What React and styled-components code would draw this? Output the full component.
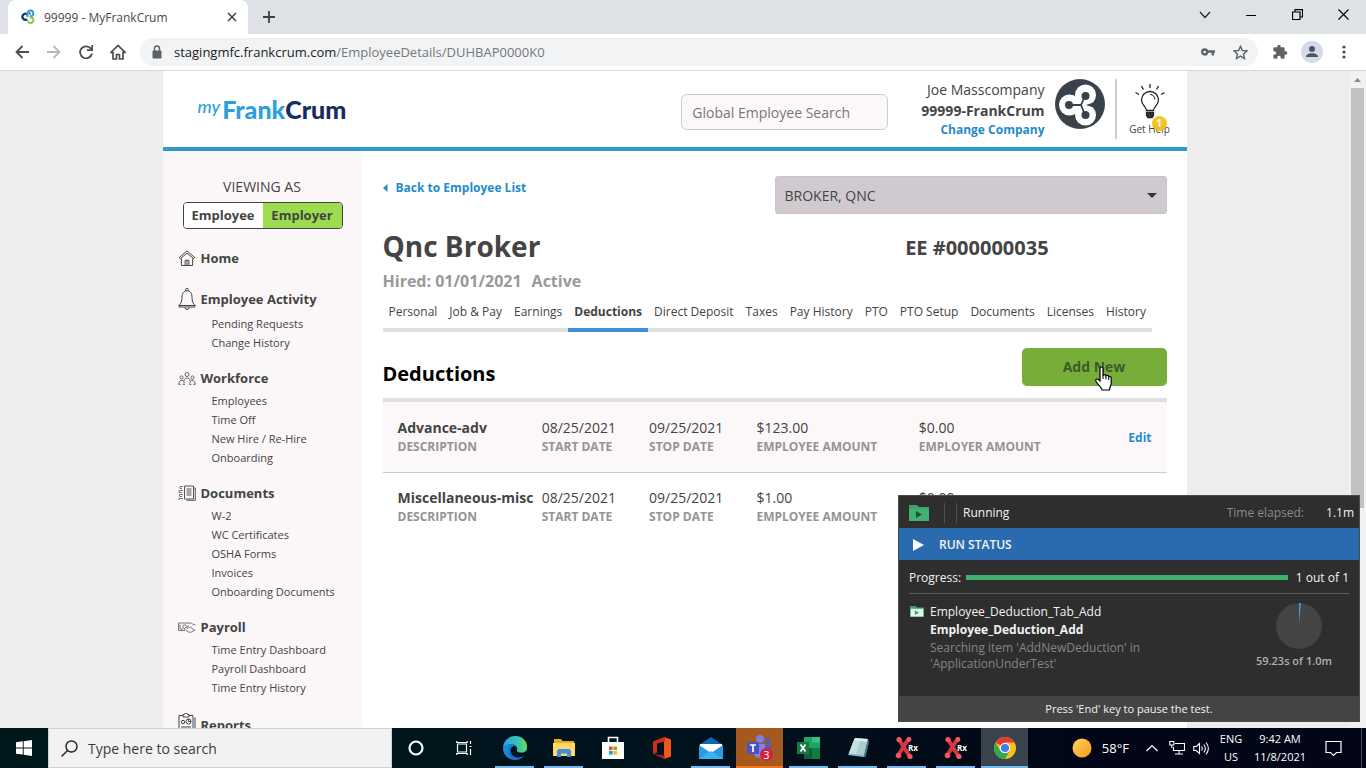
import React from 'react';
import styled, { createGlobalStyle, css } from 'styled-components';

const PAGE_FONT = '"Open Sans", "Noto Sans", sans-serif';

const GlobalStyle = createGlobalStyle`
  *, *::before, *::after { box-sizing: border-box; }
  body { margin: 0; font-family: ${PAGE_FONT}; font-size: 14px; color: #444; background: #ededed; }
  button, input, select { font-family: inherit; font-size: inherit; color: inherit; margin: 0; }
  button { cursor: pointer; padding: 0; border: 0; background: none; }
  a { text-decoration: none; color: inherit; }
  ul { list-style: none; margin: 0; padding: 0; }
  h1, h2, p { margin: 0; }
  svg { display: block; flex: none; }
`;

const Screen = styled.div`
  display: flex;
  flex-direction: column;
  height: 100vh;
  overflow: hidden;
`;

/* ---------- Browser window ---------- */

const TabStrip = styled.div`
  display: flex;
  align-items: stretch;
  height: 34px;
  flex: none;
  padding-left: 8px;
  background: #dee1e6;
`;

const BrowserTab = styled.div`
  display: flex;
  align-items: center;
  width: 240px;
  padding: 0 8px 0 12px;
  gap: 8px;
  background: #fff;
  border-radius: 8px 8px 0 0;
  font-size: 12px;
  color: #45494d;
`;

const TabTitle = styled.span`
  flex: 1;
  white-space: nowrap;
`;

const IconButton = styled.button`
  display: flex;
  align-items: center;
  justify-content: center;
  width: ${(p) => p.$w || 16}px;
  height: ${(p) => p.$h || 16}px;
  color: ${(p) => p.$color || '#5f6368'};
`;

const WindowControls = styled.div`
  display: flex;
  align-items: center;
  margin-left: auto;
  height: 29px;
`;

const Toolbar = styled.div`
  display: flex;
  align-items: center;
  height: 37px;
  flex: none;
  padding: 0 6px;
  background: #fff;
  border-bottom: 1px solid #d5d7da;
`;

const AddressBar = styled.div`
  display: flex;
  align-items: center;
  flex: 1;
  height: 28px;
  margin: 0 6px;
  padding: 0 2px 0 10px;
  border-radius: 14px;
  background: #f1f3f4;
  color: #74787c;
`;

const Url = styled.span`
  flex: 1;
  margin-left: 10px;
  font-size: 13px;
  white-space: nowrap;
  b { font-weight: 400; color: #202124; }
`;

const Avatar = styled.span`
  display: flex;
  align-items: center;
  justify-content: center;
  width: 22px;
  height: 22px;
  border-radius: 50%;
  background: #d5dbe6;
`;

/* ---------- Web page ---------- */

const Viewport = styled.div`
  display: flex;
  flex: 1;
  min-height: 0;
  overflow: hidden;
  background: #ededed;
`;

const PageScroll = styled.div`
  flex: 1;
  min-width: 0;
  overflow: hidden;
`;

const Scrollbar = styled.div`
  display: flex;
  flex-direction: column;
  align-items: center;
  width: 17px;
  background: #f1f1f1;
`;

const ScrollArrow = styled.span`
  display: flex;
  align-items: center;
  height: 17px;
`;

const ScrollThumb = styled.span`
  width: 13px;
  height: 64%;
  background: #c1c1c1;
`;

const Site = styled.div`
  max-width: 1024px;
  margin: 0 auto;
  background: #fff;
`;

const SiteHeader = styled.header`
  display: flex;
  align-items: center;
  height: 80px;
  padding: 0 16px 0 35px;
  border-bottom: 4px solid #2d9bd0;
`;

const Brand = styled.a`
  display: flex;
  align-items: center;
  margin-right: auto;
  color: #2f9fdc;
  font-family: Lato, sans-serif;
  font-size: 25px;
  font-weight: 900;
  line-height: 30px;
`;

const BrandMy = styled.span`
  align-self: flex-start;
  font-size: 18px;
  font-style: italic;
  font-weight: 500;
  line-height: 24px;
  margin-right: 2px;
`;

const BrandDark = styled.span`
  color: #172b5c;
`;

const SearchInput = styled.input`
  width: 207px;
  height: 36px;
  margin: 6px 33px 0 0;
  padding: 0 10px;
  border: 1px solid #ccc;
  border-radius: 6px;
  background: #fcf7f8;
  &::placeholder { color: #777; opacity: 1; }
`;

const Account = styled.div`
  display: flex;
  flex-direction: column;
  align-items: flex-end;
  padding-bottom: 1px;
  margin-right: 10px;
  line-height: 21px;
`;

const CompanyLink = styled.a`
  font-size: 12px;
  font-weight: 700;
  line-height: 18px;
  color: #1f8ccb;
`;

const CompanyLogo = styled.span`
  align-self: flex-start;
  margin: 8px 10px 0 0;
`;

const HelpButton = styled.button`
  position: relative;
  display: flex;
  flex-direction: column;
  align-items: center;
  width: 56px;
  height: 60px;
  padding-left: 12px;
  padding-top: 4px;
  border-left: 2px solid #ccc;
  font-size: 10px;
  line-height: 12px;
  white-space: nowrap;
`;

const HelpBadge = styled.span`
  position: absolute;
  right: 4px;
  top: 37px;
  width: 15px;
  height: 15px;
  border-radius: 50%;
  background: #f5bd0c;
  color: #fff;
  font-weight: 700;
  line-height: 14px;
  opacity: 0.9;
`;

const Columns = styled.div`
  display: flex;
  align-items: stretch;
`;

const Sidebar = styled.nav`
  width: 199px;
  flex: none;
  padding: 26px 15px 40px;
  background: #fbf7f8;
`;

const ViewingAs = styled.p`
  line-height: 20px;
  text-align: center;
`;

const Toggle = styled.div`
  display: flex;
  height: 27px;
  margin: 5px 4px 16px 5px;
  border: 1px solid #444;
  border-radius: 4px;
  overflow: hidden;
  background: #fff;
`;

const ToggleOption = styled.button`
  flex: 1;
  padding-bottom: 2px;
  font-size: 13px;
  font-weight: 700;
  background: ${(p) => (p.$on ? '#9ddb50' : '#fff')};
`;

const NavSection = styled.section`
  margin-bottom: 13px;
`;

const NavHeading = styled.a`
  display: flex;
  align-items: center;
  gap: 5px;
  height: ${(p) => (p.$tall ? 30 : 26)}px;
  font-size: 13px;
  font-weight: 700;
`;

const NavIcon = styled.span`
  display: flex;
  justify-content: center;
  width: 18px;
`;

const NavLink = styled.a`
  display: block;
  padding-left: 34px;
  font-size: 11px;
  line-height: 19px;
`;

const Main = styled.main`
  flex: 1;
  min-width: 0;
  padding: 25px 20px 100px 21px;
`;

const TopRow = styled.div`
  display: flex;
  justify-content: space-between;
  align-items: flex-start;
`;

const BackLink = styled.a`
  display: flex;
  align-items: center;
  gap: 8px;
  line-height: 24px;
  font-size: 12px;
  font-weight: 700;
  color: #1f8ccb;
`;

const SelectBox = styled.div`
  display: grid;
  align-items: center;
  width: 50%;
  > * { grid-area: 1 / 1; }
  > svg { justify-self: end; margin-right: 10px; pointer-events: none; }
`;

const EmployeeSelect = styled.select`
  appearance: none;
  width: 100%;
  height: 38px;
  padding: 0 9px;
  border: 1px solid #c8c2c9;
  border-radius: 3px;
  background: #d0cad0;
`;

const NameRow = styled.div`
  display: grid;
  grid-template-columns: 2fr 1fr;
  align-items: center;
  height: 38px;
  margin-top: 13px;
`;

const Name = styled.h1`
  font-size: 28px;
  line-height: 38px;
`;

const EmployeeNumber = styled.p`
  font-size: 20px;
  font-weight: 700;
  line-height: 24px;
  padding-top: 4px;
`;

const Status = styled.p`
  display: flex;
  gap: 10px;
  margin-top: 5px;
  font-size: 16px;
  font-weight: 700;
  line-height: 22px;
  color: #999;
`;

const Tabs = styled.ul`
  display: flex;
  width: fit-content;
  margin-top: 10px;
  font-size: 12px;
  line-height: 20px;
`;

const TabLink = styled.a`
  display: block;
  padding: 0 6px 6px;
  border-bottom: 4px solid #e0dfe0;
  white-space: nowrap;
  ${(p) => p.$on && css`
    font-weight: 700;
    border-color: #3f8edb;
  `}
`;

const SectionRow = styled.div`
  display: flex;
  align-items: center;
  justify-content: space-between;
  margin-top: 16px;
  padding-bottom: 12px;
  border-bottom: 4px solid #e0dfe1;
`;

const SectionTitle = styled.h2`
  padding-top: 14px;
  font-size: 20px;
  font-weight: 700;
  line-height: 24px;
  color: #000;
`;

const AddButton = styled.button`
  position: relative;
  width: 145px;
  height: 38px;
  padding-bottom: 2px;
  border-radius: 5px;
  background: #77ae3a;
  font-weight: 700;
  color: #405a2b;
`;

const Pointer = styled.svg`
  position: absolute;
  left: 72px;
  top: 18px;
`;

const DeductionTable = styled.table`
  width: 100%;
  table-layout: fixed;
  border-collapse: collapse;
`;

const Col = styled.col`
  width: ${(p) => p.$w};
`;

const Row = styled.tr`
  height: 70px;
  background: ${(p) => (p.$shaded ? '#fcf7f8' : '#fff')};
  border-bottom: ${(p) => (p.$shaded ? '1px solid #ccc' : '0')};
`;

const Cell = styled.td`
  padding: 0;
  padding-left: ${(p) => (p.$first ? 15 : 0)}px;
  vertical-align: middle;
  line-height: 19px;
  white-space: nowrap;
`;

const Value = styled.div`
  font-weight: ${(p) => (p.$strong ? 700 : 400)};
`;

const Label = styled.div`
  font-size: 12px;
  font-weight: 700;
  color: #969296;
`;

const EditCell = styled(Cell)`
  padding-right: 15px;
  text-align: right;
  a { font-size: 12px; font-weight: 700; color: #1f8ccb; }
`;

/* ---------- Test runner window ---------- */

const Runner = styled.aside`
  position: fixed;
  right: 6px;
  bottom: 46px;
  display: flex;
  flex-direction: column;
  width: 462px;
  border: 1px solid #4b4b4b;
  background: #2e2e2e;
  color: #f2f2f2;
  font-size: 12px;
  line-height: 16px;
`;

const RunnerBar = styled.div`
  display: flex;
  align-items: center;
  height: 32px;
  padding: 2px 5px 0 10px;
  ${(p) => p.$active && css`
    gap: 15px;
    padding-left: 13px;
    background: #2a6bb0;
    font-weight: 600;
  `}
`;

const Grip = styled.span`
  width: 13px;
  height: 20px;
  margin: 0 6px 0 15px;
  border: solid #505050;
  border-width: 0 1px;
`;

const Elapsed = styled.span`
  margin: 0 22px 0 auto;
  color: #8a8a8a;
`;

const ProgressRow = styled.div`
  display: flex;
  align-items: center;
  gap: 5px;
  height: 34px;
  margin: 0 10px;
  padding-top: 2px;
  border-bottom: 1px solid #5a5a5a;
`;

const ProgressTrack = styled.div`
  flex: 1;
  height: 5px;
  margin-right: 3px;
  background: #4a4a4a;
`;

const ProgressFill = styled.div`
  height: 100%;
  background: #41b06e;
`;

const RunnerBody = styled.div`
  display: flex;
  justify-content: space-between;
  height: 102px;
  padding: 9px 27px 0 11px;
`;

const RunItem = styled.div`
  display: flex;
  gap: 6px;
  line-height: 18px;
  svg { margin-top: 3px; }
`;

const Muted = styled.p`
  max-width: 220px;
  padding-top: 1px;
  line-height: 16px;
  color: #858585;
`;

const Timer = styled.div`
  display: flex;
  flex-direction: column;
  align-items: flex-end;
  gap: 4px;
  color: #b0b0b0;
  font-size: 11px;
  font-weight: 600;
  svg { margin-right: 10px; }
`;

const RunnerFooter = styled.div`
  height: 25px;
  background: #444;
  font-size: 11px;
  line-height: 25px;
  text-align: center;
`;

/* ---------- Taskbar ---------- */

const Taskbar = styled.footer`
  display: flex;
  align-items: stretch;
  height: 40px;
  flex: none;
  background: linear-gradient(90deg, #00171c, #01131d 50%, #020616 80%);
  color: #fff;
`;

const TaskSearch = styled.label`
  display: flex;
  align-items: center;
  gap: 10px;
  width: 344px;
  padding-left: 12px;
  background: #f2f2f2;
  color: #222;
  border: 1px solid #d2d2d2;
`;

const TaskInput = styled.input`
  flex: 1;
  min-width: 0;
  padding: 0;
  border: 0;
  outline: 0;
  background: none;
  font-size: 14px;
  &::placeholder { color: #3c3c3c; opacity: 1; }
`;

const TaskButton = styled.button`
  display: flex;
  align-items: center;
  justify-content: center;
  width: 48px;
  height: 40px;
`;

const Apps = styled.div`
  display: flex;
  gap: 2px;
  margin-left: 3px;
`;

const AppButton = styled(TaskButton)`
  width: 47px;
  background: ${(p) => p.$bg || 'transparent'};
  ${(p) => p.$open && css`
    background-image: linear-gradient(${p.$bar || '#76b9ed'}, ${p.$bar || '#76b9ed'});
    background-size: ${p.$bg ? '100%' : '39px'} 2px;
    background-position: center bottom;
    background-repeat: no-repeat;
  `}
`;

const Tray = styled.div`
  display: flex;
  align-items: center;
  margin-left: auto;
  padding-right: 4px;
  font-size: 12px;
`;

const Weather = styled.span`
  display: flex;
  align-items: center;
  gap: 10px;
  margin-right: 17px;
  font-size: 13px;
`;

const TrayIcons = styled.span`
  display: flex;
  align-items: center;
  gap: 8px;
  margin-right: 9px;
  > :first-child { margin-right: 3px; }
`;

const TrayText = styled.span`
  min-width: ${(p) => p.$w}px;
  font-size: 11px;
  line-height: 18px;
  text-align: center;
`;

const Notify = styled.span`
  padding: 0 19px 0 8px;
  height: 40px;
  display: flex;
  align-items: center;
  border-right: 1px solid #444957;
`;

/* ---------- Drawings ---------- */

const Line = ({ size = 16, w = 1.5, box = 24, children, ...rest }) => (
  <svg width={size} height={size} viewBox={`0 0 ${box} ${box}`} fill="none" stroke="currentColor" strokeWidth={w} aria-hidden="true" {...rest}>
    {children}
  </svg>
);

const Favicon = () => (
  <svg width="16" height="16" viewBox="0 0 16 16" fill="none" aria-hidden="true">
    <path d="M7.2 5.3A3 3 0 1 0 7.2 10.2" stroke="#123a66" strokeWidth="2.3" />
    <path d="M7.5 8V4.5A2.9 2.9 0 1 1 10 7.3" stroke="#2a9bd8" strokeWidth="2" />
    <path d="M9.5 8.6a2.8 2.8 0 1 1-1.6 3.3" stroke="#8cc63f" strokeWidth="2" />
    <circle cx="9.8" cy="4.4" r="1" fill="#123a66" />
  </svg>
);

const CrumMark = () => (
  <svg width="50" height="50" viewBox="0 0 50 50" aria-hidden="true">
    <circle cx="25" cy="25" r="25" fill="#39424a" />
    <g fill="#fff">
      <circle cx="14.500" cy="26" r="10.500" />
      <circle cx="30.500" cy="16" r="10.500" />
      <circle cx="30.500" cy="36" r="10.500" />
      <circle cx="24" cy="26" r="6" />
    </g>
    <path d="M26 26h-12M26 26l4-9M26 26l4 10" stroke="#39424a" strokeWidth="1.8" />
    <path d="M31 26l9-3v6z" fill="#39424a" />
    <g fill="#39424a">
      <circle cx="14" cy="26" r="4" />
      <circle cx="30.500" cy="17" r="4" />
      <circle cx="30.500" cy="36" r="4" />
    </g>
  </svg>
);

const Bulb = () => (
  <svg width="30" height="40" viewBox="0 0 30 40" fill="none" stroke="#222" strokeWidth="1.3" aria-hidden="true">
    <path d="M11.500 27.500c0-4-5-5-5-10.500a8.500 8.500 0 0 1 17 0c0 5.500-5 6.500-5 10.500z" />
    <path d="M15 11.500c3 0 4.700 2 5 5" strokeWidth="1" />
    <path d="M11.500 29.500h7v3l-1.500 2h-4l-1.500-2z" fill="#333" />
    <path d="M15 5V1M8.500 6.500L6.500 3M21.500 6.500l2-3.500M4 11.500L.5 9.500M26 11.500l3.500-2" />
  </svg>
);

const HomeIcon = () => (
  <Line size={18} w={1.3}>
    <path d="M1.500 11.500L12 2.500l10.500 9-1.500 1.500L12 5.500 3 13zM4.500 12.500V22h15v-9.500M9.500 22v-7h5v7M12 15v7" />
  </Line>
);
const BellIcon = () => (
  <svg width="18" height="22" viewBox="0 0 18 22" fill="none" stroke="#444" aria-hidden="true">
    <path d="M7.700 3V1.500a1.300 1.300 0 0 1 2.600 0V3M9 2.800c-3.700 0-5 3-5 6.500 0 4-1 6.300-3 8.200h16c-2-1.900-3-4.200-3-8.200 0-3.500-1.300-6.500-5-6.500zM1 17.500v1.500h16v-1.500M7 19.500a2 2 0 0 0 4 0" />
  </svg>
);
const PeopleIcon = () => (
  <svg width="18" height="13" viewBox="0 0 18 13" fill="none" stroke="#555" strokeWidth=".9" aria-hidden="true">
    <circle cx="9" cy="2.500" r="2" /><circle cx="3.500" cy="5.500" r="1.600" /><circle cx="14.500" cy="5.500" r="1.600" />
    <path d="M6 9c0-4 6-4 6 0M.8 12.500c0-5.500 5.400-5.500 5.400-1M11.800 11.500c0-4.500 5.400-4.500 5.400 1M.8 12.300h2M4.500 12.300h2.500M11 12.300h2.500M15.200 12.300h2" />
  </svg>
);
const DocsIcon = () => (
  <svg width="18" height="16" viewBox="0 0 18 16" fill="none" stroke="#555" aria-hidden="true">
    <path d="M6.500 1h9v13h-9zM16 3h1.300v12.300H8.500" />
    <path d="M8.500 4h5M8.500 6h5M8.500 8h5M8.500 10h5" strokeWidth="1.200" />
    <path d="M5 1.500H2v2h2M5 5.500H1v2h3M5 9.500H1.500v2H4M5 13.500H1V15" strokeWidth=".8" />
  </svg>
);
const PayIcon = () => (
  <svg width="18" height="11" viewBox="0 0 18 11" fill="none" stroke="#666" strokeWidth=".9" aria-hidden="true">
    <path d="M.5 1h9M.5 1v7.500H7M2 2.500v4.500h3M9 1.500c2-.8 4-.8 5.500.5l3 1M17.500 8c-2 0-3 2.300-5.500 2.300S8 8.500 6.500 7M11 3.500L8.500 5.500c1.500 1 2.800.5 3.800-.6L16 8" />
    <circle cx="6.500" cy="4.600" r="1.800" />
  </svg>
);
const ReportsIcon = () => (
  <svg width="18" height="24" viewBox="0 0 18 24" fill="none" stroke="#444" aria-hidden="true">
    <path d="M5 2.500H1v19h14v-19h-4M5 1.500h1.500a1.500 1.500 0 0 1 3 0H11v2.500H5zM17 4.500v19H4" />
    <circle cx="5" cy="9" r="1.700" /><circle cx="10.500" cy="8.500" r="2.500" />
    <path d="M10.500 6v2.500h2.500M3 14h10M3 17h10" />
  </svg>
);

const Folder = ({ w = 20, light }) => (
  <svg width={w} height={w * 0.8} viewBox="0 0 20 16" aria-hidden="true">
    <path d="M0 0h8l2 2h10v14H0z" fill="#3aa566" />
    {light ? <path d="M1 4h18v11H1z" fill="#e8f5ec" /> : <path d="M0 4h20v12H0z" fill="#41b070" />}
    <path d="M7 6l6 3.500L7 13z" fill={light ? '#3aa566' : '#1d5134'} />
  </svg>
);

const Edge = () => (
  <svg width="24" height="24" viewBox="0 0 24 24" aria-hidden="true">
    <defs>
      <linearGradient id="edgeTop" x1="0" x2="1"><stop offset="0" stopColor="#2aa5e0" /><stop offset=".6" stopColor="#35c1b4" /><stop offset="1" stopColor="#6fdc57" /></linearGradient>
    </defs>
    <circle cx="12" cy="12" r="12" fill="#1478c8" />
    <path d="M.2 11C1.300 4.500 6 0 12 0c7 0 12 5 12 10.500 0 4-3 6-6.500 6-3 0-4-1.300-3.500-2.500 1-2.300-.5-6-5.500-6C4 8 1 10 .2 11z" fill="url(#edgeTop)" />
    <path d="M7.500 15c0-3 2-5 4-5.300 2 .8 3 2.300 2.500 4.300-.5 1.300.8 2.800 4 2.800 2.500 0 4.300-.5 6-1.800v9h-9c-4-.5-7.500-4.200-7.500-9z" fill="#02121c" />
    <path d="M7.500 14c0 5 4 7.500 8 7.500 2.500 0 4.500-1 6-2.500-2 3.200-5.500 5-9.500 5C8 24 6 20 7.500 14z" fill="#1b6fc4" />
    <path d="M8 9.500C4.500 12 4 18.500 8.500 23c-5-1.300-8.500-6-8.400-11.500C2 9.500 5.500 8.500 8 9.500z" fill="#1a8ad6" />
  </svg>
);
const Explorer = () => (
  <svg width="22" height="20" viewBox="0 0 22 20" aria-hidden="true">
    <path d="M1 1h7l1.500 2H21v14H1z" fill="#e9ab27" />
    <path d="M0 5h22v13H0z" fill="#ffd866" />
    <path d="M4 19v-6.500L5.500 11h11l1.500 1.500V19h-4v-3.500H8V19z" fill="#3f8fd9" />
  </svg>
);
const Store = () => (
  <svg width="24" height="24" viewBox="0 0 24 24" aria-hidden="true">
    <path d="M7.500 6V1.500h9V6" fill="none" stroke="#fff" strokeWidth="1.600" />
    <path d="M1 6h22v17H1z" fill="#fff" />
    <path d="M8 10.500h3.600v3.600H8z" fill="#f25022" /><path d="M12.400 10.500H16v3.600h-3.600z" fill="#7fba00" />
    <path d="M8 15h3.600v3.600H8z" fill="#00a4ef" /><path d="M12.400 15H16v3.600h-3.600z" fill="#ffb900" />
  </svg>
);
const Office = () => (
  <svg width="20" height="24" viewBox="0 0 20 24" aria-hidden="true">
    <path d="M12 1l7 2.500v17L12 23z" fill="#f0561e" />
    <path d="M12 1L1 5.500v12.500l4-1.500V7.500L13 5.500V1z" fill="#cf2d1a" />
    <path d="M1 18l11 5 1-3.500z" fill="#a51d1d" />
  </svg>
);
const Mail = () => (
  <svg width="24" height="22" viewBox="0 0 24 22" aria-hidden="true">
    <path d="M0 8L12 0l12 8z" fill="#1066b5" />
    <path d="M1 7h22v8H1z" fill="#fff" />
    <path d="M0 8l12 8 12-8v14H0z" fill="#2a9be3" />
    <path d="M0 22l12-8 12 8z" fill="#39b4f0" />
  </svg>
);
const Teams = () => (
  <svg width="28" height="28" viewBox="0 0 28 28" aria-hidden="true">
    <circle cx="14" cy="5" r="4" fill="#7b83eb" /><circle cx="22" cy="7" r="2.700" fill="#5059c9" />
    <path d="M8 10h11v8a6 6 0 0 1-11 3z" fill="#7b83eb" /><path d="M19 11h6v7a4 4 0 0 1-6 3z" fill="#5059c9" />
    <path d="M1 8h12v12H1z" fill="#4b53bc" />
    <path d="M4 11h6M7 11v7" stroke="#fff" strokeWidth="1.700" />
    <circle cx="20.500" cy="20.500" r="6.500" fill="#d51f3c" />
    <text x="20.500" y="24.500" fill="#fff" fontSize="11" fontFamily="Open Sans, sans-serif" textAnchor="middle">3</text>
  </svg>
);
const Excel = () => (
  <svg width="24" height="22" viewBox="0 0 24 22" aria-hidden="true">
    <path d="M7 0h16v22H7z" fill="#21a366" /><path d="M7 11h8v11H7z" fill="#185c37" /><path d="M15 11h8v11h-8z" fill="#107c41" /><path d="M15 0h8v5.500h-8z" fill="#33c481" />
    <path d="M0 5h12v12H0z" fill="#107c41" /><path d="M3.500 7.500l5 7M8.500 7.500l-5 7" stroke="#fff" strokeWidth="1.800" />
  </svg>
);
const Notepad = () => (
  <svg width="24" height="24" viewBox="0 0 24 24" aria-hidden="true">
    <path d="M9 2l13 1-4 18L2 19z" fill="#8ab9c0" />
    <path d="M9 2l13 1-1 3L7.500 5z" fill="#e3ecec" />
    <path d="M7.500 5L21 6l-3.500 13L3 17.500z" fill="#a9cfd3" />
    <path d="M7.500 5L14 5.500 10 18l-7-.5z" fill="#c4dfe2" />
    <path d="M18 21l4-18 1 3-3.500 15z" fill="#4f7f8a" />
  </svg>
);
const Ranorex = () => (
  <svg width="24" height="24" viewBox="0 0 24 24" aria-hidden="true">
    <g stroke="#d9363e" strokeWidth="4" strokeLinecap="round"><path d="M4 3.500L14.500 20M13.500 3L3 19.500" /></g>
    <g fill="#f0575b"><circle cx="4" cy="3.500" r="2.600" /><circle cx="14" cy="3.500" r="2.400" /><circle cx="3.500" cy="19.500" r="2.800" /><circle cx="15" cy="20.500" r="2.600" /></g>
    <text x="13" y="14.500" fill="#fff" fontSize="8" fontWeight="700" fontFamily="Open Sans, sans-serif">Rx</text>
  </svg>
);
const Chrome = () => (
  <svg width="22" height="22" viewBox="0 0 22 22" aria-hidden="true">
    <circle cx="11" cy="11" r="11" fill="#fbc116" />
    <path d="M11 11L1.500 5.500A11 11 0 0 1 20.500 5.500H11z" fill="#e33b2e" />
    <path d="M1.500 5.500A11 11 0 0 0 11 22l4.800-8.300L11 16 6.200 13.700z" fill="#2da94f" />
    <circle cx="11" cy="11" r="5.300" fill="#fff" /><circle cx="11" cy="11" r="4.100" fill="#3f7fe8" />
  </svg>
);

/* ---------- Data ---------- */

const NAV = [
  { title: 'Home', icon: <HomeIcon />, links: [] },
  { title: 'Employee Activity', icon: <BellIcon />, tall: true, links: ['Pending Requests', 'Change History'] },
  { title: 'Workforce', icon: <PeopleIcon />, links: ['Employees', 'Time Off', 'New Hire / Re-Hire', 'Onboarding'] },
  { title: 'Documents', icon: <DocsIcon />, links: ['W-2', 'WC Certificates', 'OSHA Forms', 'Invoices', 'Onboarding Documents'] },
  { title: 'Payroll', icon: <PayIcon />, links: ['Time Entry Dashboard', 'Payroll Dashboard', 'Time Entry History'] },
  { title: 'Reports', icon: <ReportsIcon />, tall: true, links: [] },
];

const TABS = ['Personal', 'Job & Pay', 'Earnings', 'Deductions', 'Direct Deposit', 'Taxes', 'Pay History', 'PTO', 'PTO Setup', 'Documents', 'Licenses', 'History'];

const FIELDS = ['DESCRIPTION', 'START DATE', 'STOP DATE', 'EMPLOYEE AMOUNT', 'EMPLOYER AMOUNT'];

const DEDUCTIONS = [
  ['Advance-adv', '08/25/2021', '09/25/2021', '$123.00', '$0.00'],
  ['Miscellaneous-misc', '08/25/2021', '09/25/2021', '$1.00', '$0.00'],
];

const APPS = [
  { name: 'Edge', icon: <Edge />, open: true },
  { name: 'File Explorer', icon: <Explorer />, open: true },
  { name: 'Store', icon: <Store /> },
  { name: 'Office', icon: <Office /> },
  { name: 'Mail', icon: <Mail />, open: true },
  { name: 'Teams', icon: <Teams />, open: true, bg: '#a5591f', bar: '#f07818' },
  { name: 'Excel', icon: <Excel />, open: true },
  { name: 'Notepad', icon: <Notepad />, open: true },
  { name: 'Ranorex', icon: <Ranorex />, open: true },
  { name: 'Ranorex Recorder', icon: <Ranorex />, open: true },
  { name: 'Chrome', icon: <Chrome />, open: true, bg: '#3a444e' },
];

function BrowserChrome() {
  return (
    <>
      <TabStrip>
        <BrowserTab>
          <Favicon />
          <TabTitle>99999 - MyFrankCrum</TabTitle>
          <IconButton aria-label="Close tab" $color="#3c4043"><Line size={10} box={10}><path d="M1 1l8 8M9 1L1 9" /></Line></IconButton>
        </BrowserTab>
        <IconButton aria-label="New tab" $w={42} $h={34} $color="#3c4043"><Line size={12} box={12} w={1.8}><path d="M6 0v12M0 6h12" /></Line></IconButton>
        <WindowControls>
          <IconButton aria-label="Search tabs" $w={46} $color="#222"><Line size={12} box={12} w={1.2}><path d="M1 3l5 5.500L11 3" /></Line></IconButton>
          <IconButton aria-label="Minimize" $w={46} $color="#000"><Line size={10} box={10} w={1}><path d="M0 5.500h10" /></Line></IconButton>
          <IconButton aria-label="Restore" $w={46} $color="#000"><Line size={11} box={11} w={1.2}><path d="M.5 3h7.500v7.500H.5zM3 3V.6h7.500V8H8" /></Line></IconButton>
          <IconButton aria-label="Close" $w={46} $color="#000"><Line size={11} box={11} w={1.1}><path d="M.5.5l10 10M10.500.5l-10 10" /></Line></IconButton>
        </WindowControls>
      </TabStrip>
      <Toolbar>
        <IconButton aria-label="Back" $w={32} $color="#4a4d51"><Line size={14} box={14} w={1.8}><path d="M14 7H1.500M7.500 1l-6 6 6 6" /></Line></IconButton>
        <IconButton aria-label="Forward" $w={32} $color="#b5b7ba"><Line size={14} box={14} w={1.8}><path d="M0 7h12.500M6.500 1l6 6-6 6" /></Line></IconButton>
        <IconButton aria-label="Reload" $w={32} $color="#4a4d51"><Line size={14} box={14} w={1.8}><path d="M12 3.800A6 6 0 1 0 13 8.500M13.200 0v5.200H8" /></Line></IconButton>
        <IconButton aria-label="Home page" $w={32} $color="#4a4d51"><Line size={16} box={16} w={1.700}><path d="M.8 8.500L8 1.500l7.200 7H13V15h-3.500v-4.500h-3V15H3V8.500z" /></Line></IconButton>
        <AddressBar>
          <svg width="14" height="14" viewBox="0 0 14 14" aria-hidden="true"><path d="M3 6h8v7H3z" fill="#5f6368" stroke="#5f6368" /><path d="M4.500 6V3.500a2.500 2.500 0 0 1 5 0V6" fill="none" stroke="#5f6368" strokeWidth="1.400" /></svg>
          <Url><b>stagingmfc.frankcrum.com</b>/EmployeeDetails/DUHBAP0000K0</Url>
          <IconButton aria-label="Passwords" $w={32}><Line size={14} box={14} w={2.4}><circle cx="3.700" cy="7" r="2.500" /><path d="M6 6.500h8M11.800 7v3.500" /></Line></IconButton>
          <IconButton aria-label="Bookmark" $w={32}><Line size={15} w={2.2}><path d="M12 2l3 6.800 7.300.7-5.500 4.900 1.600 7.200L12 17.800l-6.400 3.800 1.600-7.200L1.700 9.500 9 8.800z" /></Line></IconButton>
        </AddressBar>
        <IconButton aria-label="Extensions" $w={32}><svg width="16" height="16" viewBox="0 0 24 24" fill="#5f6368"><path d="M20.500 11H19V7a2 2 0 0 0-2-2h-4V3.500a2.500 2.500 0 0 0-5 0V5H4a2 2 0 0 0-2 2v3.800h1.500a2.700 2.700 0 0 1 0 5.400H2V20c0 1.100.9 2 2 2h3.800v-1.500a2.700 2.700 0 0 1 5.400 0V22H17a2 2 0 0 0 2-2v-4h1.500a2.500 2.500 0 0 0 0-5z" /></svg></IconButton>
        <IconButton aria-label="Profile" $w={32}><Avatar><svg width="14" height="14" viewBox="0 0 14 14" fill="#4a5468"><circle cx="7" cy="4" r="3" /><path d="M1 12c0-5 12-5 12 0z" /></svg></Avatar></IconButton>
        <IconButton aria-label="Menu" $w={32}><svg width="4" height="14" viewBox="0 0 4 14" fill="#4a4d51"><circle cx="2" cy="2" r="1.600" /><circle cx="2" cy="7" r="1.600" /><circle cx="2" cy="12" r="1.600" /></svg></IconButton>
      </Toolbar>
    </>
  );
}

function TestRunner() {
  return (
    <Runner>
      <RunnerBar>
        <Folder />
        <Grip />
        Running
        <Elapsed>Time elapsed:</Elapsed>
        1.1m
      </RunnerBar>
      <RunnerBar $active>
        <svg width="12" height="12" viewBox="0 0 12 12" fill="#fff"><path d="M1 0l11 6-11 6z" /></svg>
        RUN STATUS
      </RunnerBar>
      <ProgressRow>
        Progress:
        <ProgressTrack><ProgressFill style={{ width: '100%' }} /></ProgressTrack>
        1 out of 1
      </ProgressRow>
      <RunnerBody>
        <RunItem>
          <Folder w={14} light />
          <div>
            <p>Employee_Deduction_Tab_Add</p>
            <p><b>Employee_Deduction_Add</b></p>
            <Muted>Searching item 'AddNewDeduction' in 'ApplicationUnderTest'</Muted>
          </div>
        </RunItem>
        <Timer>
          <svg width="46" height="46" viewBox="0 0 46 46"><circle cx="23" cy="23" r="23" fill="#444" /><path d="M23 21V0h2z" fill="#4a94d8" /></svg>
          59.23s of 1.0m
        </Timer>
      </RunnerBody>
      <RunnerFooter>Press 'End' key to pause the test.</RunnerFooter>
    </Runner>
  );
}

function DesktopBar() {
  return (
    <Taskbar>
      <TaskButton aria-label="Start"><svg width="16" height="16" viewBox="0 0 16 16" fill="#fff"><path d="M0 2.300L6.800 1.300V7.500H0zM7.700 1.200L16 0v7.500H7.700zM0 8.400h6.800v6.200L0 13.700zM7.700 8.400H16V16l-8.300-1.200z" /></svg></TaskButton>
      <TaskSearch>
        <Line size={17} box={17} w={1.4}><circle cx="10.500" cy="6.500" r="5.500" /><path d="M6.500 10.500L.5 16.500" /></Line>
        <TaskInput placeholder="Type here to search" aria-label="Type here to search" />
      </TaskSearch>
      <TaskButton aria-label="Cortana"><Line size={16} box={16} w={2.2}><circle cx="8" cy="8" r="6.500" /></Line></TaskButton>
      <TaskButton aria-label="Task view"><Line size={16} box={16} w={1.2}><path d="M1.500 4h9v8h-9zM.8 1v1.500h10.400V1M.8 15v-1.500h10.400V15M14.500 1v3M14.500 9v6M13.500 6.500h2" /></Line></TaskButton>
      <Apps>
        {APPS.map((a) => (
          <AppButton key={a.name} aria-label={a.name} $open={a.open} $bg={a.bg} $bar={a.bar}>{a.icon}</AppButton>
        ))}
      </Apps>
      <Tray>
        <Weather>
          <svg width="20" height="20" viewBox="0 0 20 20"><defs><linearGradient id="sun" x2="1" y2="1"><stop stopColor="#ffd35a" /><stop offset="1" stopColor="#f79a1c" /></linearGradient></defs><circle cx="10" cy="10" r="9.500" fill="url(#sun)" /></svg>
          58°F
        </Weather>
        <TrayIcons>
          <Line size={12} box={12} w={1.2}><path d="M.5 9L6 3.500 11.500 9" /></Line>
          <Line size={16} box={16} w={1.1}><path d="M6 3.500h9.500v7H4.500V7M10 10.500V14M6 14h8M.8 1.500h4v3.500h-4zM2.800 5v3" /></Line>
          <Line size={17} box={17} w={1.1}><path d="M.8 6.500h2.500L6.500 3.500v10L3.300 10.500H.8zM8.500 6.500c1 1.300 1 2.700 0 4M10.800 4.500c2 2.500 2 5.500 0 8M13 2.500c3 3.800 3 8.200 0 12" /></Line>
        </TrayIcons>
        <TrayText $w={24}>ENG<br />US</TrayText>
        <TrayText $w={74}>9:42 AM<br />11/8/2021</TrayText>
        <Notify><Line size={17} box={17} w={1.200}><path d="M1 1.500h15v11h-4.500l-3 3-3-3H1z" /></Line></Notify>
      </Tray>
    </Taskbar>
  );
}

export default function App() {
  return (
    <Screen>
      <GlobalStyle />
      <BrowserChrome />
      <Viewport>
        <PageScroll>
          <Site>
            <SiteHeader>
              <Brand href="#home"><BrandMy>my</BrandMy>Frank<BrandDark>Crum</BrandDark></Brand>
              <SearchInput placeholder="Global Employee Search" aria-label="Global Employee Search" />
              <Account>
                <span>Joe Masscompany</span>
                <b>99999-FrankCrum</b>
                <CompanyLink href="#company">Change Company</CompanyLink>
              </Account>
              <CompanyLogo><CrumMark /></CompanyLogo>
              <HelpButton>
                <Bulb />
                Get Help
                <HelpBadge>1</HelpBadge>
              </HelpButton>
            </SiteHeader>
            <Columns>
              <Sidebar>
                <ViewingAs>VIEWING AS</ViewingAs>
                <Toggle>
                  <ToggleOption>Employee</ToggleOption>
                  <ToggleOption $on>Employer</ToggleOption>
                </Toggle>
                {NAV.map((s) => (
                  <NavSection key={s.title}>
                    <NavHeading href="#section" $tall={s.tall}><NavIcon>{s.icon}</NavIcon>{s.title}</NavHeading>
                    <ul>{s.links.map((l) => <li key={l}><NavLink href="#page">{l}</NavLink></li>)}</ul>
                  </NavSection>
                ))}
              </Sidebar>
              <Main>
                <TopRow>
                  <BackLink href="#list">
                    <svg width="5" height="8" viewBox="0 0 5 8" fill="currentColor"><path d="M4.500 0v8L0 4z" /></svg>
                    Back to Employee List
                  </BackLink>
                  <SelectBox>
                    <EmployeeSelect aria-label="Employee"><option>BROKER, QNC</option></EmployeeSelect>
                    <svg width="10" height="5" viewBox="0 0 10 5" fill="#333"><path d="M0 0h10L5 5z" /></svg>
                  </SelectBox>
                </TopRow>
                <NameRow>
                  <Name>Qnc Broker</Name>
                  <EmployeeNumber>EE #000000035</EmployeeNumber>
                </NameRow>
                <Status><span>Hired: 01/01/2021</span><span>Active</span></Status>
                <Tabs>
                  {TABS.map((t) => <li key={t}><TabLink href="#tab" $on={t === 'Deductions'}>{t}</TabLink></li>)}
                </Tabs>
                <SectionRow>
                  <SectionTitle>Deductions</SectionTitle>
                  <AddButton>
                    Add New
                    <Pointer width="20" height="26" viewBox="0 0 20 26" aria-hidden="true">
                      <path d="M6 2.500c0-2 3-2 3 0v7c.5-1.300 2.700-1 2.900.5.600-1 2.600-.7 2.800.7.700-.7 2.500-.4 2.500 1.500V17c0 3-1.700 4-1.700 7H8c0-2.500-6-7-6.300-9.500 0-1.700 2-2 3-.7L6 15z" fill="#fff" stroke="#000" strokeWidth="1.200" />
                      <path d="M9 9v4M12 10.500V13.500M14.700 11v3" stroke="#000" />
                    </Pointer>
                  </AddButton>
                </SectionRow>
                <DeductionTable>
                  <colgroup>
                    <Col $w="20.300%" /><Col $w="13.700%" /><Col $w="13.700%" /><Col $w="20.700%" /><Col $w="20.700%" /><Col />
                  </colgroup>
                  <tbody>
                    {DEDUCTIONS.map((d, r) => (
                      <Row key={d[0]} $shaded={r === 0}>
                        {d.map((v, i) => (
                          <Cell key={FIELDS[i]} $first={i === 0}>
                            <Value $strong={i === 0}>{v}</Value>
                            <Label>{FIELDS[i]}</Label>
                          </Cell>
                        ))}
                        <EditCell><a href="#edit">Edit</a></EditCell>
                      </Row>
                    ))}
                  </tbody>
                </DeductionTable>
              </Main>
            </Columns>
          </Site>
        </PageScroll>
        <Scrollbar>
          <ScrollArrow><svg width="7" height="4" viewBox="0 0 7 4" fill="#8a8a8a"><path d="M0 4h7L3.500 0z" /></svg></ScrollArrow>
          <ScrollThumb />
        </Scrollbar>
      </Viewport>
      <TestRunner />
      <DesktopBar />
    </Screen>
  );
}
